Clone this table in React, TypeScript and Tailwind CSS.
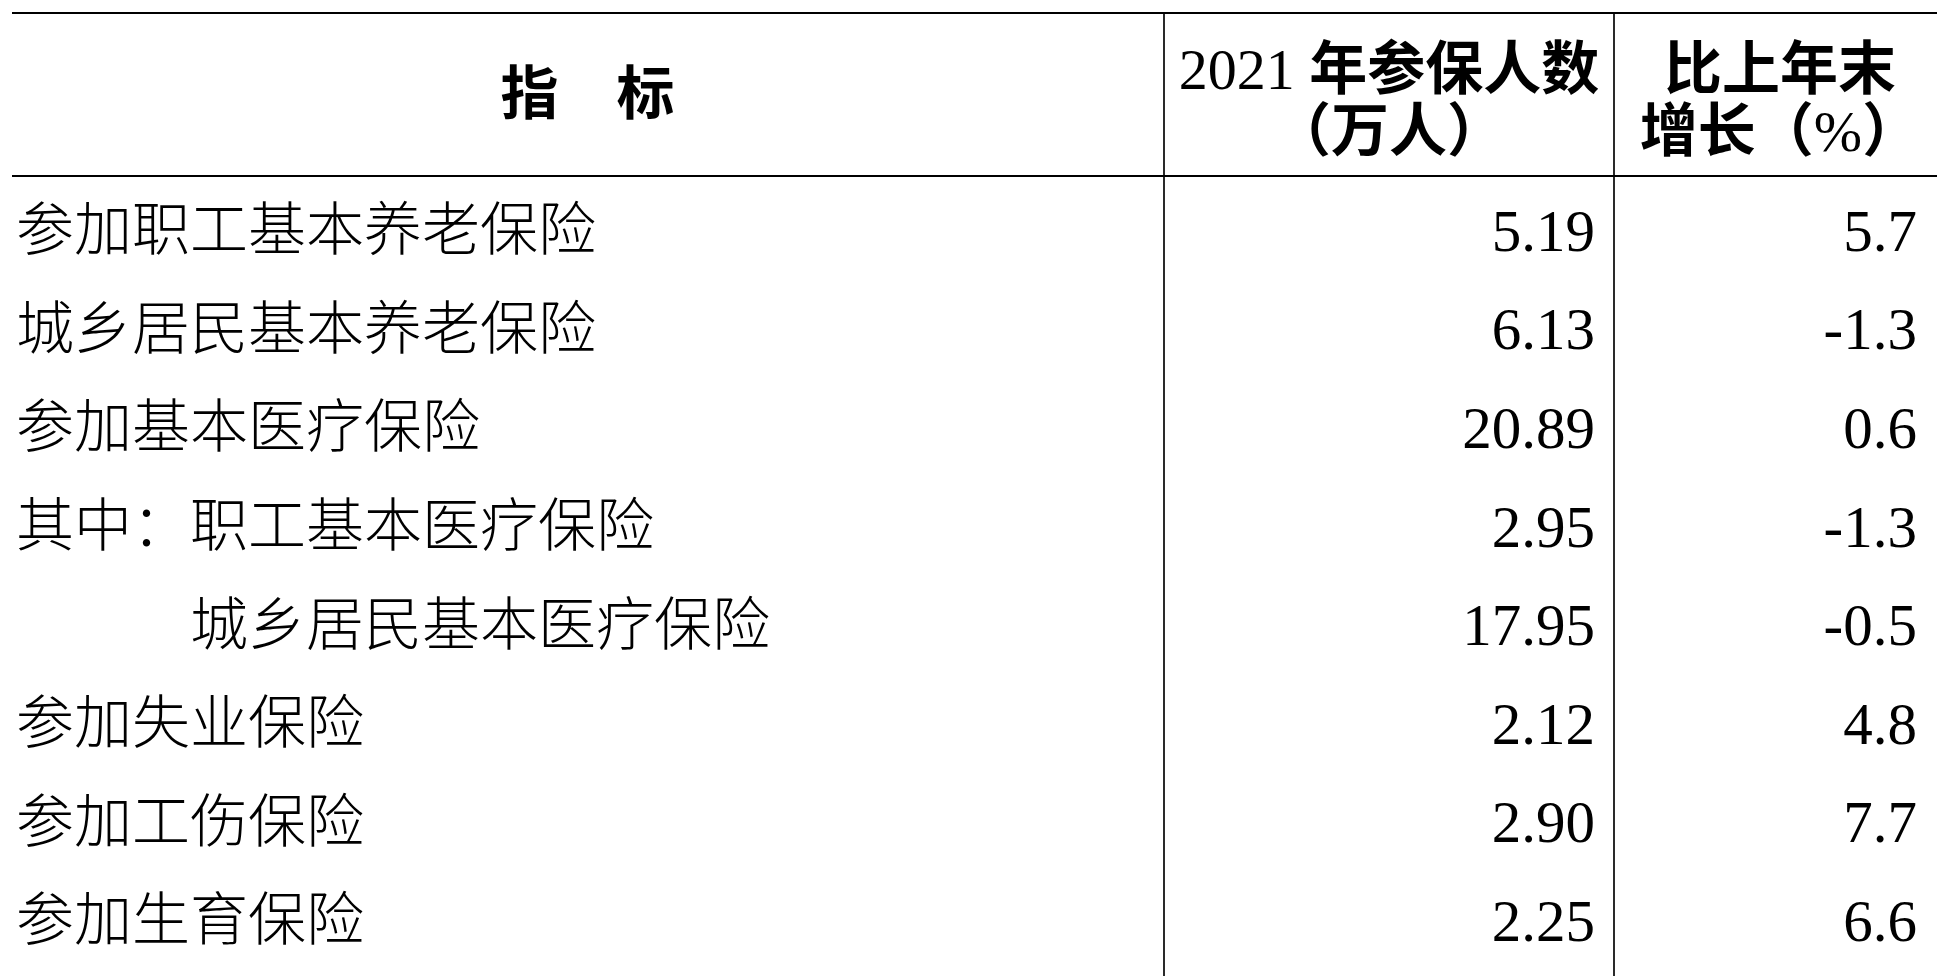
const rows = [
  { label: '参加职工基本养老保险', count: '5.19', growth: '5.7' },
  { label: '城乡居民基本养老保险', count: '6.13', growth: '-1.3' },
  { label: '参加基本医疗保险', count: '20.89', growth: '0.6' },
  { label: '其中：职工基本医疗保险', count: '2.95', growth: '-1.3' },
  { label: '城乡居民基本医疗保险', count: '17.95', growth: '-0.5', indent: true },
  { label: '参加失业保险', count: '2.12', growth: '4.8' },
  { label: '参加工伤保险', count: '2.90', growth: '7.7' },
  { label: '参加生育保险', count: '2.25', growth: '6.6' },
];

export default function App() {
  return (
    <div className="h-screen overflow-hidden bg-white pl-3 pt-3 text-black font-['Liberation_Serif','Noto_Sans_CJK_SC',serif]">
      <div className="border-t-2 border-black">
        <div className="grid h-[163px] grid-cols-[1151px_450px_1fr] border-b-2 border-black font-semibold">
          <div className="flex items-center justify-center text-[58px] leading-none">指　标</div>
          <div className="flex flex-col items-center justify-center border-l-2 border-[#2a2a2a] pt-3 text-[58px] leading-[62px]">
            <span className="font-normal">
              2021 <span className="font-semibold">年参保人数</span>
            </span>
            <span>（万人）</span>
          </div>
          <div className="flex flex-col items-center justify-center border-l-2 border-[#2a2a2a] pl-2 pt-3 text-[58px] leading-[62px]">
            <span>比上年末</span>
            <span>
              增长（<span className="font-normal">%</span>）
            </span>
          </div>
        </div>

        {rows.map((row, i) => {
          const first = i === 0;
          const last = i === rows.length - 1;
          const size = first ? 'h-[103.6px] pt-[5px]' : last ? 'h-[120px] pb-[21.4px]' : 'h-[98.6px]';
          return (
            <div key={row.label} className="grid grid-cols-[1151px_450px_1fr]">
              <div className={`${size} flex items-center text-[58px] font-light leading-none ${row.indent ? 'pl-[178px]' : 'pl-1'}`}>
                {row.label}
              </div>
              <div className={`${size} flex items-center justify-end border-l-2 border-[#2a2a2a] pr-[18px] text-[59px] leading-none`}>
                {row.count}
              </div>
              <div className={`${size} flex items-center justify-end border-l-2 border-[#2a2a2a] pr-5 text-[59px] leading-none`}>
                {row.growth}
              </div>
            </div>
          );
        })}
      </div>
    </div>
  );
}
